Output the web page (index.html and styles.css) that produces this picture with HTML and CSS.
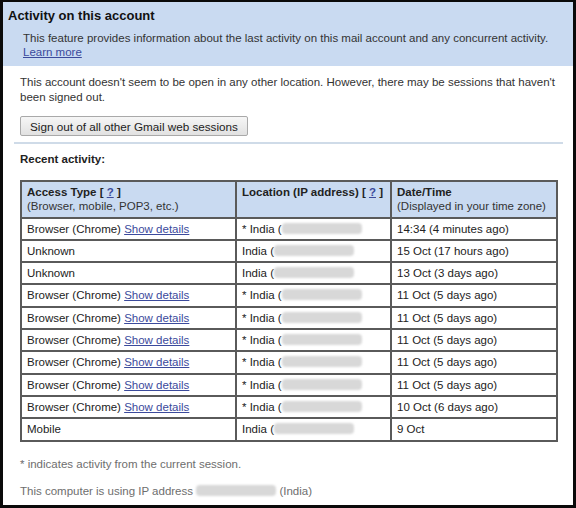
FILE: index.html
```html
<!DOCTYPE html>
<html>
<head>
<meta charset="utf-8">
<link rel="stylesheet" href="styles.css">
</head>
<body>
<div class="frame">
  <div class="header">
    <h1 class="title">Activity on this account</h1>
    <p class="intro">This feature provides information about the last activity on this mail account and any concurrent activity.<br><a href="#" class="link">Learn more</a></p>
  </div>
  <div class="content">
    <p class="status">This account doesn't seem to be open in any other location. However, there may be sessions that haven't been signed out.</p>
    <button class="signout">Sign out of all other Gmail web sessions</button>
    <div class="rule"></div>
    <h2 class="subtitle">Recent activity:</h2>
    <table class="activity">
      <colgroup><col class="c1"><col class="c2"><col class="c3"></colgroup>
      <thead>
        <tr>
          <th><b>Access Type [ <a href="#" class="link">?</a> ]</b><br>(Browser, mobile, POP3, etc.)</th>
          <th><b>Location (IP address) [ <a href="#" class="link">?</a> ]</b></th>
          <th><b>Date/Time</b><br>(Displayed in your time zone)</th>
        </tr>
      </thead>
      <tbody>
        <tr><td>Browser (Chrome) <a href="#" class="link">Show details</a></td><td>* India (<span class="ip"></span></td><td>14:34 (4 minutes ago)</td></tr>
        <tr><td>Unknown</td><td>India (<span class="ip"></span></td><td>15 Oct (17 hours ago)</td></tr>
        <tr><td>Unknown</td><td>India (<span class="ip"></span></td><td>13 Oct (3 days ago)</td></tr>
        <tr><td>Browser (Chrome) <a href="#" class="link">Show details</a></td><td>* India (<span class="ip"></span></td><td>11 Oct (5 days ago)</td></tr>
        <tr><td>Browser (Chrome) <a href="#" class="link">Show details</a></td><td>* India (<span class="ip"></span></td><td>11 Oct (5 days ago)</td></tr>
        <tr><td>Browser (Chrome) <a href="#" class="link">Show details</a></td><td>* India (<span class="ip"></span></td><td>11 Oct (5 days ago)</td></tr>
        <tr><td>Browser (Chrome) <a href="#" class="link">Show details</a></td><td>* India (<span class="ip"></span></td><td>11 Oct (5 days ago)</td></tr>
        <tr><td>Browser (Chrome) <a href="#" class="link">Show details</a></td><td>* India (<span class="ip"></span></td><td>11 Oct (5 days ago)</td></tr>
        <tr><td>Browser (Chrome) <a href="#" class="link">Show details</a></td><td>* India (<span class="ip"></span></td><td>10 Oct (6 days ago)</td></tr>
        <tr><td>Mobile</td><td>India (<span class="ip"></span></td><td>9 Oct</td></tr>
      </tbody>
    </table>
    <p class="note">* indicates activity from the current session.</p>
    <p class="note note-ip">This computer is using IP address <span class="ip ip-footer"></span> (India)</p>
  </div>
</div>
</body>
</html>
```
FILE: styles.css
```css
html, body {
  margin: 0;
  padding: 0;
  background: #000;
}
.frame {
  box-sizing: border-box;
  width: 576px;
  height: 508px;
  border-style: solid;
  border-color: #0a0a0a;
  border-width: 2px 3px 3px 3px;
  background: #fff;
  font-family: "Liberation Sans", Arial, sans-serif;
  font-size: 11.5px;
  color: #222;
  overflow: hidden;
}
.header {
  background: #c9daf1;
  padding: 5px 5px 0 5px;
  height: 64px;
  box-sizing: border-box;
}
.title {
  margin: 0;
  font-size: 13px;
  line-height: 17px;
  font-weight: bold;
  color: #111;
}
.intro {
  margin: 7px 0 0 15px;
  line-height: 14px;
  color: #333;
}
.link {
  color: #3b4a9c;
  text-decoration: underline;
}
.content {
  padding: 0 0 0 17px;
}
.status {
  margin: 9px 0 0 0;
  line-height: 15px;
  color: #333;
  padding-right: 10px;
}
.signout {
  display: block;
  margin: 11px 0 0 0;
  height: 20px;
  width: 228px;
  padding: 0 0 0 9px;
  font-family: "Liberation Sans", Arial, sans-serif;
  font-size: 11.7px;
  color: #222;
  background: linear-gradient(#f6f6f6, #e1e1e1);
  border: 1px solid #a9a9a9;
  border-radius: 2px;
  text-align: left;
}
.rule {
  margin: 6px 10px 0 -6px;
  border-top: 2px solid #cfdbe8;
}
.subtitle {
  margin: 8px 0 0 0;
  font-size: 11.5px;
  line-height: 15px;
  font-weight: bold;
  color: #222;
}
.activity {
  margin-top: 13px;
  border-collapse: separate;
  border-spacing: 0;
  border: 1px solid #5a5a5a;
  width: 536px;
  table-layout: fixed;
}
.c1 { width: 215px; }
.c2 { width: 155px; }
.c3 { width: 166px; }
.activity th, .activity td {
  border: 1px solid #5a5a5a;
  padding: 3px 5px 3px 5px;
  line-height: 14.3px;
  text-align: left;
  vertical-align: top;
  white-space: nowrap;
  overflow: hidden;
}
.activity th {
  background: #c9daf1;
  font-weight: normal;
  color: #333;
}
.activity th b {
  color: #222;
}
.activity td {
  color: #222;
}
.ip {
  display: inline-block;
  width: 80px;
  height: 11px;
  vertical-align: -1px;
  background: #d8d8d8;
  border-radius: 4px;
  filter: blur(1.2px);
}
.ip-footer {
  width: 80px;
}
.note {
  margin: 15px 0 0 0;
  line-height: 14px;
  color: #6e6e6e;
}
.note-ip {
  margin-top: 13px;
}
```
